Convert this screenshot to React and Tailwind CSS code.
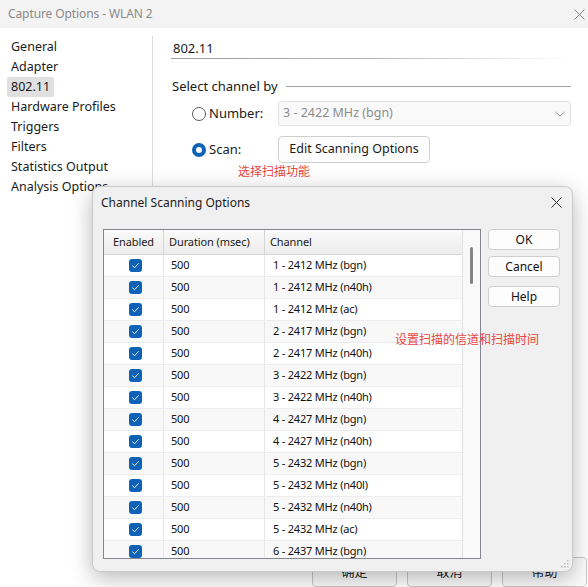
import React from 'react';

const channels = [
  '1 - 2412 MHz (bgn)',
  '1 - 2412 MHz (n40h)',
  '1 - 2412 MHz (ac)',
  '2 - 2417 MHz (bgn)',
  '2 - 2417 MHz (n40h)',
  '3 - 2422 MHz (bgn)',
  '3 - 2422 MHz (n40h)',
  '4 - 2427 MHz (bgn)',
  '4 - 2427 MHz (n40h)',
  '5 - 2432 MHz (bgn)',
  '5 - 2432 MHz (n40l)',
  '5 - 2432 MHz (n40h)',
  '5 - 2432 MHz (ac)',
  '6 - 2437 MHz (bgn)',
];

const navItems = [
  'General',
  'Adapter',
  '802.11',
  'Hardware Profiles',
  'Triggers',
  'Filters',
  'Statistics Output',
  'Analysis Options',
];

function CloseIcon({ color = '#333' }) {
  return (
    <svg width="11" height="11" viewBox="0 0 11 11">
      <path d="M0.5 0.5 L10.5 10.5 M10.5 0.5 L0.5 10.5" stroke={color} strokeWidth="1" fill="none" />
    </svg>
  );
}

function Check() {
  return (
    <svg width="13" height="13" viewBox="0 0 13 13">
      <rect x="0" y="0" width="13" height="13" rx="3" fill="#0f62b8" />
      <path d="M3.6 6.9 L5.6 8.7 L9.4 4.6" stroke="#fff" strokeWidth="0.9" fill="none" strokeLinecap="round" strokeLinejoin="round" />
    </svg>
  );
}

function Radio({ on }) {
  return on ? (
    <svg width="14" height="14" viewBox="0 0 14 14">
      <circle cx="7" cy="7" r="7" fill="#0f62b8" />
      <circle cx="7" cy="7" r="3" fill="#fff" />
    </svg>
  ) : (
    <svg width="14" height="14" viewBox="0 0 14 14">
      <circle cx="7" cy="7" r="6.5" fill="#fff" stroke="#5c5c5c" strokeWidth="1" />
    </svg>
  );
}

function Grip() {
  return (
    <svg width="10" height="10" viewBox="0 0 10 10">
      {[[8, 2], [5, 5], [8, 5], [2, 8], [5, 8], [8, 8]].map(([x, y], i) => (
        <rect key={i} x={x} y={y} width="1.5" height="1.5" fill="#bdbdbd" />
      ))}
    </svg>
  );
}

function ChannelDialog() {
  return (
    <div className="absolute left-[92px] top-[186px] w-[481px] h-[386px] bg-[#f0f0f0] rounded-[8px] border border-[#c9c9c9] shadow-[0_6px_22px_rgba(0,0,0,0.28)] flex flex-col">
      <div className="h-[31px] flex items-center justify-between pl-[8px] pr-[10px]">
        <span className="text-[12px] text-[#1a1a1a]">Channel Scanning Options</span>
        <CloseIcon />
      </div>
      <div className="flex pl-[10px] pt-[11px] gap-[7px] relative flex-1">
        <div className="w-[378px] h-[330px] border border-[#82878f] bg-white flex overflow-hidden">
          <div className="flex-1 flex flex-col">
            <div className="h-[25px] flex text-[11px] tracking-[-0.1px] text-[#1a1a1a] bg-gradient-to-b from-[#fbfbfb] to-[#ececec] border-b border-[#d6d6d6] shrink-0">
              <div className="w-[60px] border-r border-[#d6d6d6] flex items-center justify-center">Enabled</div>
              <div className="w-[101px] border-r border-[#d6d6d6] flex items-center pl-[5px]">Duration (msec)</div>
              <div className="flex-1 flex items-center pl-[5px]">Channel</div>
            </div>
            {channels.map((c, i) => (
              <div
                key={i}
                className={`h-[22px] shrink-0 flex text-[11px] tracking-[-0.2px] text-[#111] border-b border-[#ededed] ${i % 2 ? 'bg-[#f8f8f8]' : 'bg-white'}`}
              >
                <div className="w-[60px] border-r border-[#e6e6e6] flex items-center justify-center pl-[4px]">
                  <Check />
                </div>
                <div className="w-[101px] border-r border-[#e6e6e6] flex items-center pl-[7px]">500</div>
                <div className="flex-1 flex items-center pl-[8px] whitespace-nowrap">{c}</div>
              </div>
            ))}
          </div>
          <div className="w-[18px] bg-[#f9f9f9] border-l border-[#e2e2e2] flex justify-center pt-[17px] shrink-0">
            <div className="w-[3px] h-[37px] rounded-full bg-[#858585]" />
          </div>
        </div>
        <div className="flex flex-col w-[72px]">
          <button className="h-[21px] rounded-[4px] border border-[#cfcfcf] bg-[#fdfdfd] text-[12px] text-[#111]">OK</button>
          <button className="h-[21px] mt-[6px] rounded-[4px] border border-[#cfcfcf] bg-[#fdfdfd] text-[12px] text-[#111]">Cancel</button>
          <button className="h-[21px] mt-[9px] rounded-[4px] border border-[#cfcfcf] bg-[#fdfdfd] text-[12px] text-[#111]">Help</button>
        </div>
        <span className="absolute left-[302px] top-[113px] text-[12px] text-[#e8453c] whitespace-nowrap">设置扫描的信道和扫描时间</span>
      </div>
      <div className="absolute right-[3px] bottom-[3px]">
        <Grip />
      </div>
    </div>
  );
}

export default function App() {
  return (
    <div
      className="relative w-[588px] h-[587px] overflow-hidden bg-white text-[#1a1a1a]"
      style={{ fontFamily: '"Noto Sans", "Noto Sans CJK SC", sans-serif' }}
    >
      <div className="h-[28px] bg-[#f3f3f3] flex items-center justify-between pl-[8px] pr-[3px]">
        <span className="text-[12px] tracking-[-0.1px] text-[#8a8a8a]">Capture Options - WLAN 2</span>
        <CloseIcon color="#8a8a8a" />
      </div>
      <div className="h-[559px] flex flex-col">
        <div className="flex flex-1">
          <div className="w-[153px] border-r border-[#dcdcdc] mt-[8px] pt-[1px] pl-[7px] flex flex-col items-start">
            {navItems.map((n) => (
              <div
                key={n}
                className={`h-[20px] flex items-center px-[4px] rounded-[2px] text-[12.5px] whitespace-nowrap ${n === '802.11' ? 'bg-[#e0e0e0]' : ''}`}
              >
                {n}
              </div>
            ))}
          </div>
          <div className="flex-1 pl-[18px] pr-[17px] pt-[10px] relative">
            <div className="text-[13px] pl-[2px] leading-[20px]">802.11</div>
            <div className="h-[1px] mt-[0px] bg-gradient-to-r from-[#9d9d9d] via-[#b5b5b5] to-[#ffffff]" />
            <div className="flex items-center mt-[17px] gap-[8px]">
              <span className="text-[13px] pl-[1px] leading-[20px]">Select channel by</span>
              <div className="flex-1 h-[1px] bg-[#a3a3a3]" />
            </div>
            <div className="flex items-center mt-[5px] pl-[21px] h-[25px]">
              <Radio />
              <span className="text-[13px] ml-[3px] w-[68px]">Number:</span>
              <div className="flex-1 h-[25px] ml-[1px] border border-[#e3e3e3] rounded-[3px] bg-[#f9f9f9] flex items-center justify-between pl-[4px] pr-[4px]">
                <span className="text-[12.5px] text-[#8c8c8c]">3 - 2422 MHz (bgn)</span>
                <svg width="12" height="8" viewBox="0 0 12 8">
                  <path d="M1.5 2 L6 6 L10.5 2" stroke="#9a9a9a" strokeWidth="1" fill="none" />
                </svg>
              </div>
            </div>
            <div className="flex items-center mt-[10px] pl-[21px] h-[27px]">
              <Radio on />
              <span className="text-[13px] ml-[3px] w-[69px]">Scan:</span>
              <button className="h-[27px] w-[152px] border border-[#d0d0d0] rounded-[4px] bg-[#fdfdfd] text-[12.5px]">
                Edit Scanning Options
              </button>
            </div>
            <div className="text-[13px] mt-[22px] pl-[1px]">Encryption</div>
            <span className="absolute left-[85px] top-[135px] text-[12px] text-[#e8453c] whitespace-nowrap">选择扫描功能</span>
          </div>
        </div>
        <div className="flex justify-end gap-[10px] mr-[1px] h-[30px] shrink-0">
          {['确定', '取消', '帮助'].map((b) => (
            <button key={b} className="w-[85px] h-[30px] border border-[#c8c8c8] rounded-[4px] bg-[#fbfbfb] text-[13px]">
              {b}
            </button>
          ))}
        </div>
      </div>
      <ChannelDialog />
    </div>
  );
}
